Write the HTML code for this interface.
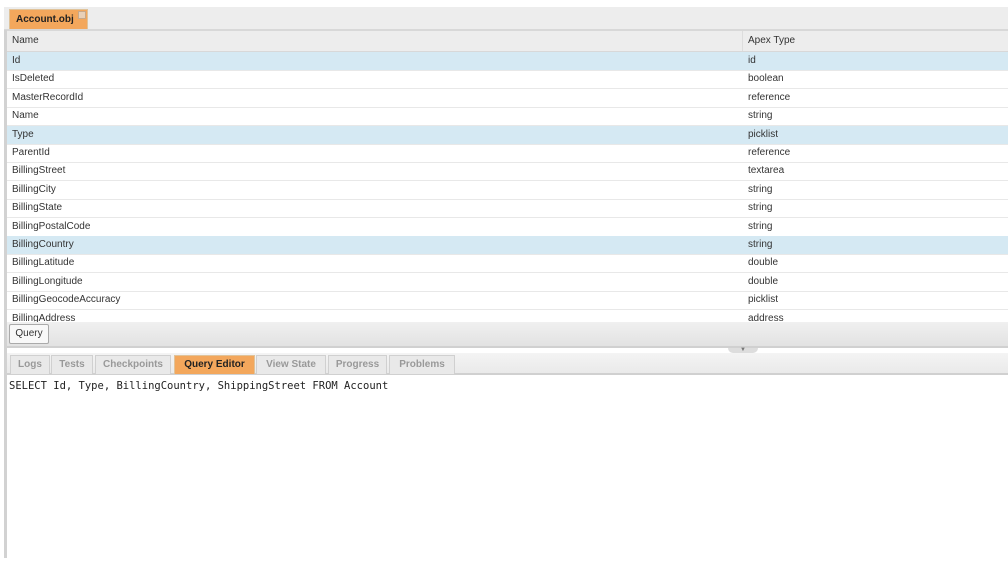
<!DOCTYPE html>
<html><head><style>
body{margin:0;width:1008px;height:564px;background:#fff;font-family:"Liberation Sans",Arial,sans-serif;font-size:10px;color:#333;position:relative;overflow:hidden}
.a{position:absolute}
.row{position:absolute;left:7px;width:1001px;height:18px;border-bottom:1px solid #e8e8e8;line-height:18px}
.row span{position:absolute;left:5px}
.row b{position:absolute;left:741px;font-weight:normal}
.hl{background:#d5e9f3}
.tab{position:absolute;top:355px;height:18px;line-height:18px;background:#e9e9e9;border:1px solid #d0d0d0;border-bottom:none;color:#999;font-weight:bold;font-size:10px;text-align:center}
</style></head><body>
<div class="a" style="left:4px;top:7px;width:1004px;height:22px;background:#ededed;border-bottom:2px solid #d8d8d8"></div>
<div class="a" style="left:9px;top:9px;width:79px;height:20px;background:#f3a75c;border:1px solid #e0c39a;border-bottom:none;line-height:20px;font-weight:bold;font-size:10px;color:#222;padding-left:6px;box-sizing:border-box;white-space:nowrap">Account.obj<span style="display:inline-block;width:6px;height:6px;background:#e8d0b8;border:1px solid #c8a888;vertical-align:3px;margin-left:4px"></span></div>
<div class="a" style="left:4px;top:30px;width:3px;height:528px;background:#d2d2d2"></div>
<div class="a" style="left:7px;top:31px;width:1001px;height:20px;background:#ededed;border-bottom:1px solid #d8d8d8;line-height:20px"><span style="position:absolute;left:5px">Name</span><span style="position:absolute;left:741px">Apex Type</span><span style="position:absolute;left:735px;top:0;width:1px;height:20px;background:#ddd"></span></div>
<div class="row hl" style="top:52px"><span>Id</span><b>id</b></div>
<div class="row" style="top:70.4px"><span>IsDeleted</span><b>boolean</b></div>
<div class="row" style="top:88.8px"><span>MasterRecordId</span><b>reference</b></div>
<div class="row" style="top:107.2px"><span>Name</span><b>string</b></div>
<div class="row hl" style="top:125.6px"><span>Type</span><b>picklist</b></div>
<div class="row" style="top:144px"><span>ParentId</span><b>reference</b></div>
<div class="row" style="top:162.4px"><span>BillingStreet</span><b>textarea</b></div>
<div class="row" style="top:180.8px"><span>BillingCity</span><b>string</b></div>
<div class="row" style="top:199.2px"><span>BillingState</span><b>string</b></div>
<div class="row" style="top:217.6px"><span>BillingPostalCode</span><b>string</b></div>
<div class="row hl" style="top:236px"><span>BillingCountry</span><b>string</b></div>
<div class="row" style="top:254.4px"><span>BillingLatitude</span><b>double</b></div>
<div class="row" style="top:272.8px"><span>BillingLongitude</span><b>double</b></div>
<div class="row" style="top:291.2px"><span>BillingGeocodeAccuracy</span><b>picklist</b></div>
<div class="row" style="top:309.6px"><span>BillingAddress</span><b>address</b></div>
<div class="a" style="left:7px;top:322px;width:1001px;height:24px;background:linear-gradient(#f0f0f0,#e2e2e2);border-bottom:2px solid #d0d0d0"></div>
<div class="a" style="left:9px;top:324px;width:38px;height:18px;background:#f8f8f8;border:1px solid #aaa;border-radius:2px;line-height:18px;text-align:center;color:#333">Query</div>
<div class="a" style="left:728px;top:348px;width:30px;height:5px;background:#ddd;border-radius:0 0 6px 6px;font-size:6px;text-align:center;line-height:5px;color:#777">▼</div>
<div class="a" style="left:7px;top:353px;width:1001px;height:20px;background:linear-gradient(#f4f4f4,#eaeaea);border-bottom:2px solid #d0d0d0"></div>
<div class="tab" style="left:10px;width:38px">Logs</div>
<div class="tab" style="left:51px;width:40px">Tests</div>
<div class="tab" style="left:95px;width:74px">Checkpoints</div>
<div class="tab" style="left:174px;width:79px;background:#f3a75c;color:#222;border-color:#e0c39a">Query Editor</div>
<div class="tab" style="left:256px;width:68px">View State</div>
<div class="tab" style="left:328px;width:57px">Progress</div>
<div class="tab" style="left:389px;width:64px">Problems</div>
<div class="a" style="left:9px;top:380px;font-family:'DejaVu Sans Mono','Liberation Mono',monospace;font-size:10.5px;color:#222">SELECT Id, Type, BillingCountry, ShippingStreet FROM Account</div>
</body></html>
